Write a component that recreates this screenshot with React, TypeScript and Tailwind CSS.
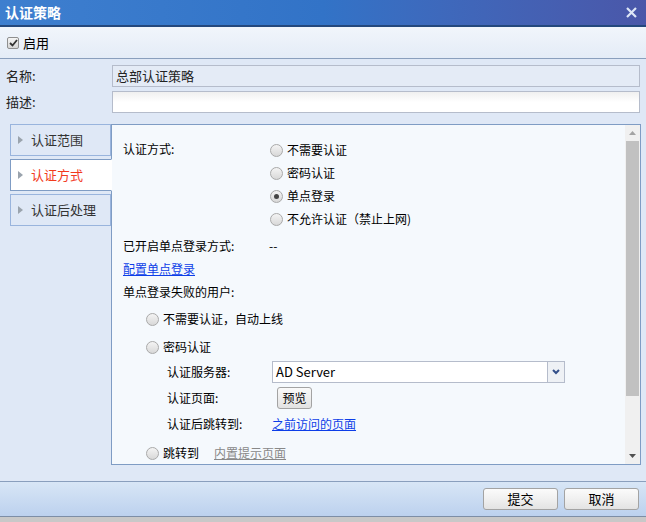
import React from 'react';

const Radio = ({ checked = false }: { checked?: boolean }) => (
  <span className="relative inline-flex h-[13px] w-[13px] shrink-0 items-center justify-center rounded-full border border-[#a9a9a9] bg-gradient-to-b from-[#f4f4f4] to-[#d8d8d8]">
    {checked && <span className="h-[5px] w-[5px] rounded-full bg-[#444]" />}
  </span>
);

const RadioRow = ({ label, checked, className = '' }: { label: string; checked?: boolean; className?: string }) => (
  <div className={`flex items-center gap-[4px] ${className}`}>
    <Radio checked={checked} />
    <span>{label}</span>
  </div>
);

const Tab = ({ label, active = false }: { label: string; active?: boolean }) => (
  <div
    className={`flex h-[32px] items-center gap-[8px] border pl-[7px] ${
      active
        ? 'relative z-10 -mr-px border-[#7f9cc4] border-r-white bg-white text-[#f23b1e]'
        : 'border-[#99b4dd] bg-[#dfe8f6] text-[#333]'
    }`}
  >
    <svg width="5" height="8" viewBox="0 0 5 8">
      <path d="M0 0L5 4L0 8Z" fill="#9aa3ad" />
    </svg>
    <span>{label}</span>
  </div>
);

const Btn = ({ label }: { label: string }) => (
  <button className="h-[22px] w-[75px] rounded-[3px] border border-[#a3a3a3] bg-gradient-to-b from-[#fbfbfb] via-[#f0f0f0] to-[#e3e3e3] text-[13px] text-black">
    {label}
  </button>
);

export default function App() {
  return (
    <div
      className="flex h-[522px] w-[646px] flex-col overflow-hidden bg-[#dfe8f6] text-[12px] text-[#222]"
      style={{ fontFamily: '"Noto Sans CJK SC", "Liberation Sans", sans-serif' }}
    >
      {/* title bar */}
      <div className="flex h-[27px] shrink-0 items-center justify-between border-b-2 border-[#24487d] bg-gradient-to-r from-[#3e7fcf] via-[#3273c7] to-[#4a57a9] px-[5px]">
        <span className="text-[14px] font-bold text-white">认证策略</span>
        <svg width="11" height="11" viewBox="0 0 11 11" className="mr-[4px]">
          <path d="M1 1L10 10M10 1L1 10" stroke="#dde6f6" strokeWidth="2.2" />
        </svg>
      </div>

      {/* toolbar */}
      <div className="flex h-[32px] shrink-0 items-center gap-[4px] border-b border-[#8a9fbd] bg-gradient-to-b from-[#f1f5fb] to-[#e4ecf7] pl-[7px]">
        <span className="flex h-[12px] w-[12px] items-center justify-center rounded-[2px] border border-[#8f8f8f] bg-gradient-to-b from-[#f5f5f5] to-[#d6d6d6]">
          <svg width="9" height="8" viewBox="0 0 9 8">
            <path d="M1 4L3.5 6.5L8 1" stroke="#333" strokeWidth="1.8" fill="none" />
          </svg>
        </span>
        <span className="text-[13px] text-black">启用</span>
      </div>

      {/* fields */}
      <div className="flex shrink-0 flex-col gap-[4px] px-[6px] pt-[6px]">
        <div className="flex items-center">
          <span className="w-[106px] text-[13px]">名称:</span>
          <div className="flex h-[22px] flex-1 items-center border border-[#b5bccb] bg-[#e4ebf6] px-[3px] text-[13px]">
            总部认证策略
          </div>
        </div>
        <div className="flex items-center">
          <span className="w-[106px] text-[13px]">描述:</span>
          <div className="h-[22px] flex-1 border border-[#b5bccb] bg-gradient-to-b from-[#f0f0f0] via-white to-white" />
        </div>
      </div>

      {/* tabs + content */}
      <div className="flex h-[352px] shrink-0 pl-[10px] pr-[5px] pt-[11px]">
        <div className="flex w-[101px] shrink-0 flex-col gap-[3px] text-[13px]">
          <Tab label="认证范围" />
          <Tab label="认证方式" active />
          <Tab label="认证后处理" />
        </div>
        <div className="flex flex-1 border border-[#7f9cc4] bg-[#f5f9fd]">
          <div className="flex flex-1 flex-col pl-[11px] pt-[15px] text-[12px] text-black">
            <div className="flex">
              <span className="w-[147px]">认证方式:</span>
              <div className="flex flex-col gap-[5px] pt-px">
                <RadioRow label="不需要认证" />
                <RadioRow label="密码认证" />
                <RadioRow label="单点登录" checked />
                <RadioRow label="不允许认证（禁止上网)" />
              </div>
            </div>
            <div className="mt-[9px] flex">
              <span className="w-[146px]">已开启单点登录方式:</span>
              <span>--</span>
            </div>
            <a className="mt-[5px] w-fit text-[#0d3ee8] underline">配置单点登录</a>
            <span className="mt-[5px]">单点登录失败的用户:</span>
            <RadioRow label="不需要认证，自动上线" className="ml-[23px] mt-[9px]" />
            <RadioRow label="密码认证" className="ml-[23px] mt-[10px]" />
            <div className="ml-[44px] mt-[5px] flex flex-col gap-[4px]">
              <div className="flex items-center">
                <span className="w-[105px]">认证服务器:</span>
                <div className="flex h-[22px] w-[293px] border border-[#b5bccb] bg-white">
                  <span className="flex flex-1 items-center pl-[3px] text-[13px]">AD Server</span>
                  <span className="flex w-[17px] items-center justify-center border-l border-[#b5bccb] bg-[#eef1f5]">
                    <svg width="8" height="6" viewBox="0 0 8 6">
                      <path d="M1 1L4 4L7 1" stroke="#34508a" strokeWidth="2" fill="none" />
                    </svg>
                  </span>
                </div>
              </div>
              <div className="flex items-center">
                <span className="w-[110px]">认证页面:</span>
                <button className="h-[22px] w-[35px] rounded-[3px] border border-[#a3a3a3] bg-gradient-to-b from-[#fafafa] to-[#e2e2e2] text-[12px]">
                  预览
                </button>
              </div>
              <div className="flex h-[22px] items-center">
                <span className="w-[105px]">认证后跳转到:</span>
                <a className="text-[#0d3ee8] underline">之前访问的页面</a>
              </div>
            </div>
            <div className="ml-[23px] mt-[9px] flex items-center">
              <RadioRow label="跳转到" />
              <a className="ml-[15px] text-[#888] underline">内置提示页面</a>
            </div>
          </div>
          {/* scrollbar */}
          <div className="flex w-[15px] shrink-0 flex-col items-center bg-[#f0f0f0]">
            <div className="flex h-[16px] items-center justify-center">
              <svg width="7" height="4" viewBox="0 0 7 4">
                <path d="M0 4L3.5 0L7 4Z" fill="#a3a3a3" />
              </svg>
            </div>
            <div className="h-[255px] w-[13px] bg-[#c1c1c1]" />
            <div className="flex-1" />
            <div className="flex h-[16px] items-center justify-center">
              <svg width="7" height="4" viewBox="0 0 7 4">
                <path d="M0 0L7 0L3.5 4Z" fill="#505050" />
              </svg>
            </div>
          </div>
        </div>
      </div>

      <div className="flex-1" />

      {/* footer */}
      <div className="flex h-[35px] shrink-0 items-center justify-end gap-[6px] border-t border-[#8a9fbd] bg-gradient-to-b from-[#d8e6f6] to-[#bcd1ee] pr-[7px]">
        <Btn label="提交" />
        <Btn label="取消" />
      </div>
      <div className="h-[6px] shrink-0 border-t border-[#7d8ea6] bg-[#c8c8c8]" />
    </div>
  );
}
